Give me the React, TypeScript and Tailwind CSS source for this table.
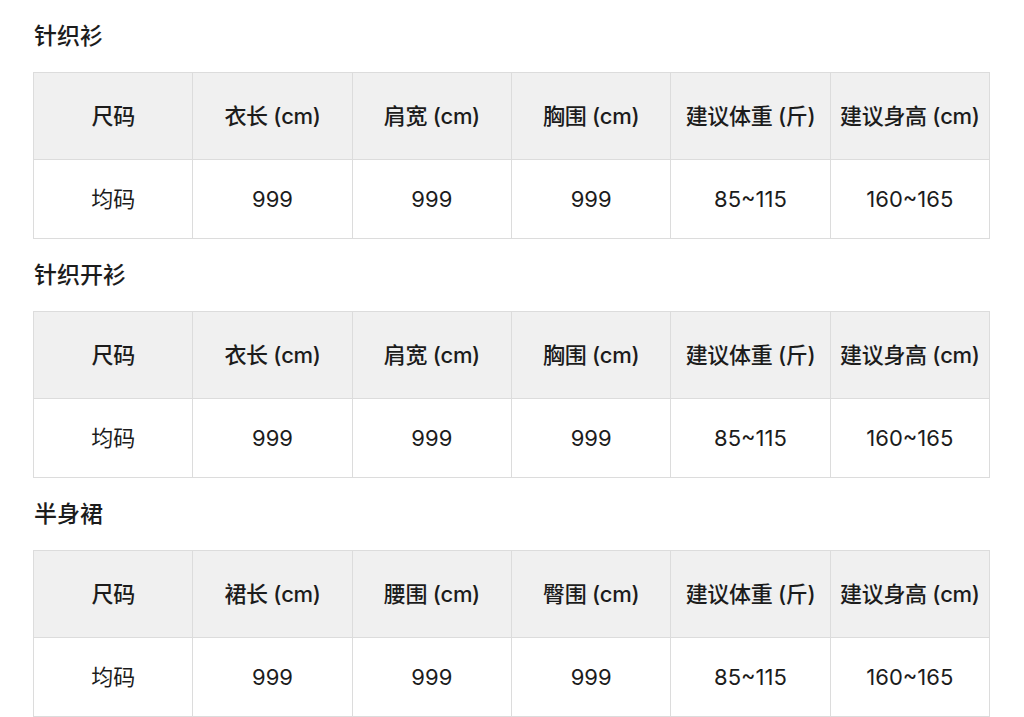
import React from "react";

type Section = { title: string; headers: string[] };

const sections: Section[] = [
  { title: "针织衫", headers: ["尺码", "衣长 (cm)", "肩宽 (cm)", "胸围 (cm)", "建议体重 (斤)", "建议身高 (cm)"] },
  { title: "针织开衫", headers: ["尺码", "衣长 (cm)", "肩宽 (cm)", "胸围 (cm)", "建议体重 (斤)", "建议身高 (cm)"] },
  { title: "半身裙", headers: ["尺码", "裙长 (cm)", "腰围 (cm)", "臀围 (cm)", "建议体重 (斤)", "建议身高 (cm)"] },
];

const row = ["均码", "999", "999", "999", "85~115", "160~165"];

export default function App() {
  return (
    <div
      className="w-[1024px] h-[717px] overflow-hidden bg-white px-[33px] text-[#1c1c1c]"
      style={{ fontFamily: 'Inter, "Noto Sans CJK SC", sans-serif' }}
    >
      {sections.map((s, i) => (
        <div key={i} className="flex flex-col">
          <div className="flex items-center h-[72px]">
            <h2 className="text-[23px] font-medium leading-none pl-[1px] pt-[1px]">{s.title}</h2>
          </div>
          <table className="w-[957px] table-fixed border-collapse">
            <thead>
              <tr className="h-[87px] bg-[#f0f0f0]">
                {s.headers.map((h, j) => (
                  <th key={j} className="border border-[#dcdcdc] text-[22px] font-medium text-center p-0 whitespace-nowrap tracking-[-0.3px]">
                    {h}
                  </th>
                ))}
              </tr>
            </thead>
            <tbody>
              <tr className="h-[79px]">
                {row.map((c, j) => (
                  <td key={j} className="border border-[#dcdcdc] text-[22px] text-center p-0">
                    {c}
                  </td>
                ))}
              </tr>
            </tbody>
          </table>
        </div>
      ))}
    </div>
  );
}
